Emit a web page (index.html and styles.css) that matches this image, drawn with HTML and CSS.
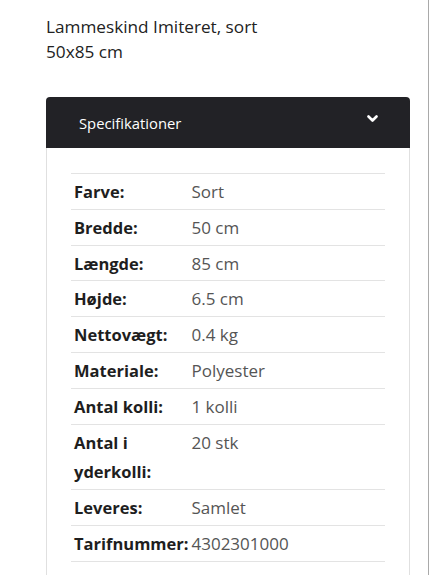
FILE: index.html
```html
<!DOCTYPE html>
<html lang="da">
<head>
<meta charset="utf-8">
<link rel="stylesheet" href="styles.css">
</head>
<body>
<div class="page">
  <p class="title">Lammeskind Imiteret, sort<br>50x85 cm</p>
  <div class="card">
    <div class="card-header">
      <span>Specifikationer</span>
      <svg class="chev" width="11" height="8" viewBox="0 0 11 8"><path d="M1.5 1.5 L5.5 5.5 L9.5 1.5" fill="none" stroke="#fff" stroke-width="2.6" stroke-linecap="round" stroke-linejoin="round"/></svg>
    </div>
    <div class="card-body">
      <table class="specs">
        <tr><th>Farve:</th><td>Sort</td></tr>
        <tr><th>Bredde:</th><td>50 cm</td></tr>
        <tr><th>Længde:</th><td>85 cm</td></tr>
        <tr><th>Højde:</th><td>6.5 cm</td></tr>
        <tr><th>Nettovægt:</th><td>0.4 kg</td></tr>
        <tr><th>Materiale:</th><td>Polyester</td></tr>
        <tr><th>Antal kolli:</th><td>1 kolli</td></tr>
        <tr><th>Antal i yderkolli:</th><td>20 stk</td></tr>
        <tr><th>Leveres:</th><td>Samlet</td></tr>
        <tr><th>Tarifnummer:</th><td>4302301000</td></tr>
      </table>
    </div>
  </div>
</div>
</body>
</html>
```
FILE: styles.css
```css
html, body {
  margin: 0;
  padding: 0;
  background: #fff;
}
body {
  font-family: "Open Sans", "Noto Sans", sans-serif;
  color: #222;
}
.page {
  width: 429px;
  min-height: 575px;
  border-right: 1px solid #a9a9a9;
  padding: 14px 0 0 46px;
  box-sizing: border-box;
}
.title {
  margin: 0 0 33px 0;
  font-size: 17.2px;
  line-height: 25px;
  color: #222;
}
.card {
  width: 364px;
}
.card-header {
  background: #222226;
  color: #fff;
  height: 51px;
  border-radius: 4px 4px 0 0;
  display: flex;
  align-items: center;
  justify-content: space-between;
  padding: 0 32px 0 33px;
  font-size: 14.8px;
  box-sizing: border-box;
}
.chev {
  margin-top: -8px;
}
.card-body {
  border: 1px solid #e0e0e0;
  border-top: none;
  padding: 25px 24px 14px 24px;
}
.specs {
  width: 100%;
  border-collapse: collapse;
  font-size: 16.5px;
}
.specs th, .specs td {
  border-top: 1px solid #e3e3e3;
  border-bottom: 1px solid #e3e3e3;
  vertical-align: top;
  text-align: left;
  line-height: 29.8px;
  padding: 3px 3px 2px 3px;
}
.specs th {
  font-weight: 700;
  color: #1e1e1e;
  width: 109px;
}
.specs td {
  font-weight: 400;
  color: #555;
  padding-left: 0;
  font-size: 17px;
}
```
